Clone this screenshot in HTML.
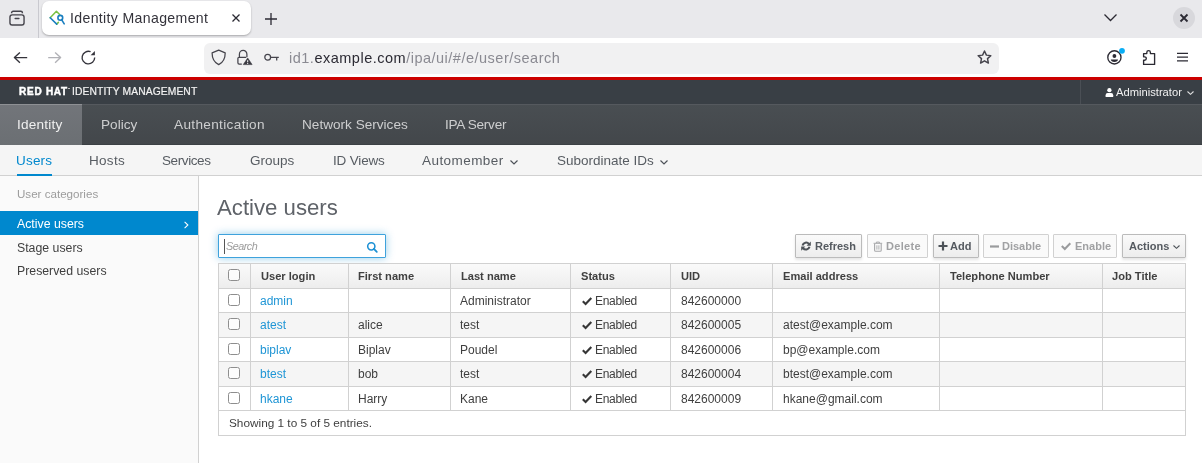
<!DOCTYPE html>
<html><head><meta charset="utf-8">
<style>
*{box-sizing:border-box;margin:0;padding:0}
html,body{width:1202px;height:463px;overflow:hidden;background:#fff;font-family:"Liberation Sans",sans-serif;position:relative}
.a{will-change:transform}
.a{position:absolute;white-space:nowrap}
svg{position:absolute;overflow:visible}
/* browser chrome */
#tabstrip{left:0;top:0;width:1202px;height:38px;background:#e9e9ec}
#sep{left:38px;top:0;width:1px;height:38px;background:#c9c9cf}
#tab{left:42px;top:1px;width:209px;height:34px;background:#fff;border-radius:7px;box-shadow:0 1px 2px rgba(0,0,0,.28)}
#toolbar{left:0;top:38px;width:1202px;height:39px;background:#fff}
#urlbar{left:204px;top:42.5px;width:795px;height:30.5px;background:#f1f1f2;border-radius:6px}
#red{left:0;top:77px;width:1202px;height:3px;background:#cc0000}
#hdr{left:0;top:80px;width:1202px;height:24px;background:#393f45}
#nav{left:0;top:104px;width:1202px;height:41px;background:linear-gradient(#494e52,#43474b);border-top:1px solid #55595e;border-bottom:1px solid #3b4044}
#navact{left:0;top:104px;width:82px;height:41px;background:linear-gradient(#72757a,#6b6f73);border-top:1px solid #8e9094}
#sub{left:0;top:145px;width:1202px;height:31px;background:#f5f5f5;border-bottom:1px solid #d1d1d1}
#subul{left:17px;top:174px;width:35px;height:2px;background:#0088ce}
#side{left:0;top:176px;width:199px;height:287px;background:#fafafa;border-right:1px solid #d1d1d1}
#sideact{left:0;top:211px;width:198px;height:24px;background:#0088ce}
.navt{color:#cdcecf;font-size:13.6px;top:117px}
.subt{color:#575c62;font-size:13.5px;top:152.5px}
.sidet{color:#3f3f3f;font-size:12.3px}
.btn{top:234px;height:24px;border:1px solid #bbb;border-radius:1px;background:linear-gradient(#fafafa,#ededed);box-shadow:0 2px 3px rgba(3,3,3,.1)}
.btn.dis{border-color:#d1d1d1;background:#fafafa;box-shadow:none}
.btnt{top:239.9px;font-size:11px;font-weight:bold;color:#555a60}
.dist{color:#a0a1a3}
.hl{left:218px;width:968px;height:1px;background:#d1d1d1}
.vl{top:263px;width:1px;height:148px;background:#d1d1d1}
.th{top:269.5px;font-size:11.1px;font-weight:bold;color:#404040}
.td{font-size:12px;color:#3f3f3f}
.lk{color:#1f95d5}
.cb{width:12px;height:11.6px;border:1.4px solid #8e8e8e;border-radius:2.5px;background:rgba(255,255,255,.7)}
</style></head><body>
<!-- tab strip -->
<div id="tabstrip" class="a"></div>
<div id="sep" class="a"></div>
<svg style="left:9px;top:10px" width="16" height="16" viewBox="0 0 16 16"><rect x="0.95" y="4.9" width="14.1" height="10.1" rx="2.2" fill="none" stroke="#45444c" stroke-width="1.4"/><path d="M2.6 3.2 V2.8 A1.5 1.5 0 0 1 4.1 1.3 H11.9 A1.5 1.5 0 0 1 13.4 2.8 V3.2" stroke="#45444c" stroke-width="1.4" fill="none"/><path d="M6.2 8.6h3.7" stroke="#45444c" stroke-width="1.5" stroke-linecap="round"/></svg>
<div id="tab" class="a"></div>
<svg style="left:44px;top:6px" width="24" height="24" viewBox="0 0 24 24"><path d="M6.2 11.7L12.4 5.2L15.6 8.6" stroke="#7ac143" stroke-width="1.5" fill="none" stroke-linecap="round" stroke-linejoin="round"/><path d="M12.7 18.1L14.4 16.4" stroke="#7ac143" stroke-width="1.5" fill="none" stroke-linecap="round"/><path d="M6.2 11.7L12.7 18.1" stroke="#1a7fc0" stroke-width="1.6" fill="none" stroke-linecap="round"/><circle cx="16.3" cy="11.8" r="2.4" stroke="#1a7fc0" stroke-width="1.6" fill="none"/><path d="M17.6 13.6L20.2 17.9" stroke="#1a7fc0" stroke-width="1.6" stroke-linecap="round"/></svg>
<div class="a" style="left:69.6px;top:9.5px;font-size:14.1px;letter-spacing:0.35px;color:#34333b">Identity Management</div>
<svg style="left:232px;top:14px" width="8" height="8" viewBox="0 0 8 8"><path d="M0.5 0.5L7.5 7.5M7.5 0.5L0.5 7.5" stroke="#2b2a33" stroke-width="1.3"/></svg>
<svg style="left:265px;top:13px" width="12" height="12" viewBox="0 0 12 12"><path d="M6 0v12M0 6h12" stroke="#2b2a33" stroke-width="1.3"/></svg>
<svg style="left:1104px;top:14px" width="13" height="7" viewBox="0 0 13 7"><path d="M0.5 0.5L6.5 6.5L12.5 0.5" stroke="#2b2a33" stroke-width="1.3" fill="none"/></svg>
<div class="a" style="left:1173px;top:7px;width:22px;height:22px;border-radius:11px;background:#d8d8dc"></div>
<svg style="left:1180px;top:14px" width="8" height="8" viewBox="0 0 8 8"><path d="M0.5 0.5L7.5 7.5M7.5 0.5L0.5 7.5" stroke="#2b2a33" stroke-width="1.8"/></svg>
<!-- toolbar -->
<div id="toolbar" class="a"></div>
<svg style="left:13px;top:51px" width="16" height="13" viewBox="0 0 16 13"><path d="M14.2 6.6H1.6M6.9 1.4L1.4 6.6L6.9 11.8" stroke="#34333b" stroke-width="1.35" fill="none" stroke-linejoin="round"/></svg>
<svg style="left:47px;top:51px" width="16" height="13" viewBox="0 0 16 13"><path d="M1.2 6.6H13.8M8.1 1.4L13.6 6.6L8.1 11.8" stroke="#b1b1b6" stroke-width="1.35" fill="none" stroke-linejoin="round"/></svg>
<svg style="left:81px;top:50px" width="16" height="16" viewBox="0 0 16 16"><path d="M13.7 7.6 A6.3 6.3 0 1 1 9.6 1.7" stroke="#34333b" stroke-width="1.35" fill="none"/><path d="M9.6 5.3 H13.9 V1 Z" fill="#34333b"/></svg>
<div id="urlbar" class="a"></div>
<svg style="left:210px;top:49px" width="17" height="17" viewBox="0 0 17 17"><path d="M8.7 1.2 L15.2 3.9 C15.2 10 12.3 13.8 8.7 15.6 C5.1 13.8 2.1 10 2.1 3.9 Z" stroke="#45444c" stroke-width="1.25" fill="none" stroke-linejoin="round"/></svg>
<svg style="left:236px;top:49px" width="17" height="17" viewBox="0 0 17 17"><path d="M3.4 8.2 V5.2 A3.75 3.75 0 0 1 10.9 5.2 V8.2" stroke="#45444c" stroke-width="1.25" fill="none"/><path d="M5.8 15 H3.2 A1.3 1.3 0 0 1 1.9 13.7 V9.6 A1.3 1.3 0 0 1 3.2 8.3 H10.2" stroke="#45444c" stroke-width="1.25" fill="none"/><path d="M11.7 9 L16.1 15.6 H7.3 Z" fill="#3b3a42" stroke="#3b3a42" stroke-width="0.6" stroke-linejoin="round"/><path d="M11.7 11.2v2" stroke="#fff" stroke-width="1"/><circle cx="11.7" cy="14.4" r="0.55" fill="#fff"/></svg>
<svg style="left:264px;top:53px" width="16" height="9" viewBox="0 0 16 9"><circle cx="3.7" cy="4.3" r="2.9" stroke="#45444c" stroke-width="1.25" fill="none"/><path d="M6.6 4.3H14.8M12.7 4.3V7.6" stroke="#45444c" stroke-width="1.25"/></svg>
<div class="a" style="left:289px;top:49.7px;font-size:14.5px;letter-spacing:0.5px;color:#8a8a92"><span>id1.</span><span style="color:#2b2a33">example.com</span><span>/ipa/ui/#/e/user/search</span></div>
<svg style="left:976px;top:49px" width="17" height="17" viewBox="0 0 17 17"><path d="M8.5 2 L10.4 6.1 L14.8 6.6 L11.5 9.6 L12.4 14.1 L8.5 11.8 L4.6 14.1 L5.5 9.6 L2.2 6.6 L6.6 6.1 Z" stroke="#45444c" stroke-width="1.45" fill="none" stroke-linejoin="round"/></svg>
<svg style="left:1106px;top:49px" width="18" height="17" viewBox="0 0 18 17"><circle cx="8.4" cy="8.4" r="6.6" stroke="#2b2a33" stroke-width="1.35" fill="none"/><circle cx="8.4" cy="7" r="1.9" fill="#2b2a33"/><path d="M4.8 10.6 H12 Q11.8 13 8.4 13 Q5 13 4.8 10.6Z" fill="#2b2a33"/><circle cx="16" cy="1.8" r="2.9" fill="#0aaef5"/></svg>
<svg style="left:1141px;top:49px" width="16" height="17" viewBox="0 0 16 17"><path d="M2.6 15.4 V11.2 H3.6 A1.7 1.7 0 0 0 3.6 7.8 H2.6 V4.6 H5.8 V3.4 A1.8 1.8 0 0 1 9.4 3.4 V4.6 H13.6 V15.4 Z" stroke="#2b2a33" stroke-width="1.35" fill="none" stroke-linejoin="round"/></svg>
<svg style="left:1177px;top:52px" width="12" height="10" viewBox="0 0 12 10"><path d="M0 1.4H11M0 5.2H11M0 8.9H11" stroke="#2b2a33" stroke-width="1.25"/></svg>
<!-- red hat header -->
<div id="red" class="a"></div>
<div id="hdr" class="a"></div>
<div class="a" style="left:18.6px;top:86px;font-size:10px;font-weight:bold;color:#fff;letter-spacing:0.75px;-webkit-text-stroke:0.45px #fff">RED HAT</div><div class="a" style="left:68.3px;top:87.6px;width:2px;height:1px;background:#bbb"></div>
<div class="a" style="left:71.5px;top:85.5px;font-size:10.3px;color:#f2f2f2;letter-spacing:0.1px;-webkit-text-stroke:0.2px #f2f2f2">IDENTITY MANAGEMENT</div>
<div class="a" style="left:1080px;top:80px;width:1px;height:24px;background:#4a4f55"></div>
<svg style="left:1105px;top:88px" width="9" height="9" viewBox="0 0 9 9"><circle cx="4.4" cy="2.2" r="2.15" fill="#fff"/><path d="M0.6 9 V7.2 Q0.6 4.9 2.6 4.9 H6.2 Q8.2 4.9 8.2 7.2 V9Z" fill="#fff"/></svg>
<div class="a" style="left:1116px;top:86px;font-size:11.2px;color:#f2f2f2">Administrator</div>
<svg style="left:1187px;top:91px" width="7" height="4" viewBox="0 0 7 4"><path d="M0.5 0.5L3.5 3.3L6.5 0.5" stroke="#e0e0e0" stroke-width="1.1" fill="none"/></svg>
<!-- primary nav -->
<div id="nav" class="a"></div>
<div id="navact" class="a"></div>
<div class="a navt" style="left:16.5px;color:#f0f0f0;letter-spacing:0.2px">Identity</div>
<div class="a navt" style="left:100.8px">Policy</div>
<div class="a navt" style="left:174px;letter-spacing:0.34px">Authentication</div>
<div class="a navt" style="left:302px">Network Services</div>
<div class="a navt" style="left:445px;letter-spacing:-0.28px">IPA Server</div>
<!-- sub nav -->
<div id="sub" class="a"></div>
<div id="subul" class="a"></div>
<div class="a subt" style="left:16px;color:#0088ce;letter-spacing:0.2px">Users</div>
<div class="a subt" style="left:88.7px;letter-spacing:0.3px">Hosts</div>
<div class="a subt" style="left:162px;letter-spacing:-0.4px">Services</div>
<div class="a subt" style="left:250px">Groups</div>
<div class="a subt" style="left:332.5px;letter-spacing:-0.17px">ID Views</div>
<div class="a subt" style="left:422px;letter-spacing:0.44px">Automember</div>
<svg style="left:510px;top:159.5px" width="8" height="5" viewBox="0 0 8 5"><path d="M0.5 0.5L4 4L7.5 0.5" stroke="#4d5258" stroke-width="1.2" fill="none"/></svg>
<div class="a subt" style="left:556.5px">Subordinate IDs</div>
<svg style="left:660px;top:159.5px" width="8" height="5" viewBox="0 0 8 5"><path d="M0.5 0.5L4 4L7.5 0.5" stroke="#4d5258" stroke-width="1.2" fill="none"/></svg>
<!-- sidebar -->
<div id="side" class="a"></div>
<div class="a" style="left:17px;top:187px;font-size:11.6px;color:#9c9c9c">User categories</div>
<div id="sideact" class="a"></div>
<div class="a sidet" style="left:17px;top:217px;color:#fff">Active users</div>
<svg style="left:184px;top:220.5px" width="5" height="8" viewBox="0 0 5 8"><path d="M0.6 0.8L3.9 4L0.6 7.2" stroke="#fff" stroke-width="1.05" fill="none"/></svg>
<div class="a sidet" style="left:17px;top:240.6px">Stage users</div>
<div class="a sidet" style="left:17px;top:264.3px">Preserved users</div>
<!-- main -->
<div class="a" style="left:217px;top:195px;font-size:22.2px;color:#5f6369">Active users</div>
<!-- MAIN -->
<div class="a" style="left:218px;top:234px;width:168px;height:24px;border:1px solid #3fa2dc;border-radius:1px;box-shadow:0 0 8px rgba(0,136,206,.42);background:#fff"></div>
<div class="a" style="left:224px;top:239px;width:1px;height:15px;background:#555"></div>
<div class="a" style="left:225.5px;top:240px;font-size:10.8px;font-style:italic;color:#9b9b9b;letter-spacing:-0.5px">Search</div>
<svg style="left:366px;top:241px" width="12" height="12" viewBox="0 0 12 12"><circle cx="5.3" cy="5.3" r="3.6" stroke="#1c90d4" stroke-width="1.55" fill="none"/><path d="M7.9 7.9L10.8 10.8" stroke="#1c90d4" stroke-width="1.8" stroke-linecap="round"/></svg>
<div class="a btn" style="left:795px;width:67px"></div>
<div class="a btnt" style="left:814.5px;letter-spacing:0.0px">Refresh</div>
<div class="a btn dis" style="left:867px;width:61px"></div>
<div class="a btnt dist" style="left:885.8px;letter-spacing:0.3px">Delete</div>
<div class="a btn" style="left:933px;width:46px"></div>
<div class="a btnt" style="left:950.2px;letter-spacing:0.1px">Add</div>
<div class="a btn dis" style="left:983px;width:66px"></div>
<div class="a btnt dist" style="left:1002.2px;letter-spacing:0px">Disable</div>
<div class="a btn dis" style="left:1053px;width:64px"></div>
<div class="a btnt dist" style="left:1074.8px;letter-spacing:0px">Enable</div>
<div class="a btn" style="left:1122px;width:64px"></div>
<div class="a btnt" style="left:1129.2px;letter-spacing:0px">Actions</div>
<svg style="left:801px;top:241.4px" width="10" height="10.2" viewBox="0 0 10 10" preserveAspectRatio="none"><path d="M1.5 4.4A3.7 3.7 0 0 1 8 3" stroke="#4d5258" stroke-width="2" fill="none"/><path d="M9.8 0.4V4.6H5.6Z" fill="#4d5258"/><path d="M8.5 5.6A3.7 3.7 0 0 1 2 7" stroke="#4d5258" stroke-width="2" fill="none"/><path d="M0.2 9.6V5.4H4.4Z" fill="#4d5258"/></svg>
<svg style="left:873px;top:241px" width="10" height="11" viewBox="0 0 10 11"><path d="M0.6 2.3H9.2M3.4 2.2V1.1H6.4V2.2" stroke="#a6a7a9" stroke-width="1" fill="none"/><path d="M1.6 2.8V9.2Q1.6 10.3 2.7 10.3H7.1Q8.2 10.3 8.2 9.2V2.8" stroke="#a6a7a9" stroke-width="1.1" fill="none"/><path d="M3.9 4.3V8.6M5.9 4.3V8.6" stroke="#a6a7a9" stroke-width="0.9"/></svg>
<svg style="left:938px;top:241px" width="10" height="10" viewBox="0 0 10 10"><path d="M5 0.5V9.5M0.5 5H9.5" stroke="#4d5258" stroke-width="2.2"/></svg>
<svg style="left:990px;top:245px" width="9" height="3" viewBox="0 0 9 3"><path d="M0 1.5H9" stroke="#9a9b9d" stroke-width="2.2"/></svg>
<svg style="left:1061px;top:242px" width="10" height="8" viewBox="0 0 10 8"><path d="M0.8 4L3.8 7L9.3 1.2" stroke="#9a9b9d" stroke-width="2" fill="none"/></svg>
<svg style="left:1173px;top:245px" width="7" height="4" viewBox="0 0 7 4"><path d="M0.5 0.5L3.5 3.3L6.5 0.5" stroke="#4d5258" stroke-width="1.1" fill="none"/></svg>
<div class="a" style="left:218px;top:263px;width:968px;height:173px;border:1px solid #d1d1d1;background:#fff"></div>
<div class="a" style="left:219px;top:264px;width:966px;height:24px;background:linear-gradient(#fafafa,#ededed)"></div>
<div class="a" style="left:219px;top:313px;width:966px;height:24px;background:#f5f5f5"></div>
<div class="a" style="left:219px;top:362px;width:966px;height:24px;background:#f5f5f5"></div>
<div class="a hl" style="top:288px"></div>
<div class="a hl" style="top:312px"></div>
<div class="a hl" style="top:337px"></div>
<div class="a hl" style="top:361px"></div>
<div class="a hl" style="top:386px"></div>
<div class="a hl" style="top:410px"></div>
<div class="a vl" style="left:250px"></div>
<div class="a vl" style="left:348px"></div>
<div class="a vl" style="left:450px"></div>
<div class="a vl" style="left:570px"></div>
<div class="a vl" style="left:670px"></div>
<div class="a vl" style="left:772px"></div>
<div class="a vl" style="left:939px"></div>
<div class="a vl" style="left:1102px"></div>
<div class="a th" style="left:260.6px">User login</div>
<div class="a th" style="left:358.4px">First name</div>
<div class="a th" style="left:460.6px">Last name</div>
<div class="a th" style="left:581px">Status</div>
<div class="a th" style="left:681px">UID</div>
<div class="a th" style="left:783px">Email address</div>
<div class="a th" style="left:949.6px">Telephone Number</div>
<div class="a th" style="left:1112px">Job Title</div>
<div class="a cb" style="left:228px;top:269.1px"></div>
<div class="a cb" style="left:228px;top:293.6px"></div>
<div class="a cb" style="left:228px;top:318.1px"></div>
<div class="a cb" style="left:228px;top:342.6px"></div>
<div class="a cb" style="left:228px;top:367.1px"></div>
<div class="a cb" style="left:228px;top:391.6px"></div>
<div class="a td lk" style="left:260px;top:293.8px">admin</div>
<div class="a td" style="left:459.9px;top:293.8px">Administrator</div>
<svg style="left:581.5px;top:297px" width="10" height="8" viewBox="0 0 10 8"><path d="M0.8 4.2L3.6 7L9.3 1" stroke="#363636" stroke-width="2.1" fill="none"/></svg>
<div class="a td" style="left:595.4px;top:293.8px;letter-spacing:-0.3px">Enabled</div>
<div class="a td" style="left:680.5px;top:293.8px">842600000</div>
<div class="a td lk" style="left:260px;top:317.8px">atest</div>
<div class="a td" style="left:357.8px;top:317.8px">alice</div>
<div class="a td" style="left:459.9px;top:317.8px">test</div>
<svg style="left:581.5px;top:321px" width="10" height="8" viewBox="0 0 10 8"><path d="M0.8 4.2L3.6 7L9.3 1" stroke="#363636" stroke-width="2.1" fill="none"/></svg>
<div class="a td" style="left:595.4px;top:317.8px;letter-spacing:-0.3px">Enabled</div>
<div class="a td" style="left:680.5px;top:317.8px">842600005</div>
<div class="a td" style="left:782.5px;top:317.8px">atest@example.com</div>
<div class="a td lk" style="left:260px;top:342.8px">biplav</div>
<div class="a td" style="left:357.8px;top:342.8px">Biplav</div>
<div class="a td" style="left:459.9px;top:342.8px">Poudel</div>
<svg style="left:581.5px;top:346px" width="10" height="8" viewBox="0 0 10 8"><path d="M0.8 4.2L3.6 7L9.3 1" stroke="#363636" stroke-width="2.1" fill="none"/></svg>
<div class="a td" style="left:595.4px;top:342.8px;letter-spacing:-0.3px">Enabled</div>
<div class="a td" style="left:680.5px;top:342.8px">842600006</div>
<div class="a td" style="left:782.5px;top:342.8px">bp@example.com</div>
<div class="a td lk" style="left:260px;top:366.8px">btest</div>
<div class="a td" style="left:357.8px;top:366.8px">bob</div>
<div class="a td" style="left:459.9px;top:366.8px">test</div>
<svg style="left:581.5px;top:370px" width="10" height="8" viewBox="0 0 10 8"><path d="M0.8 4.2L3.6 7L9.3 1" stroke="#363636" stroke-width="2.1" fill="none"/></svg>
<div class="a td" style="left:595.4px;top:366.8px;letter-spacing:-0.3px">Enabled</div>
<div class="a td" style="left:680.5px;top:366.8px">842600004</div>
<div class="a td" style="left:782.5px;top:366.8px">btest@example.com</div>
<div class="a td lk" style="left:260px;top:391.8px">hkane</div>
<div class="a td" style="left:357.8px;top:391.8px">Harry</div>
<div class="a td" style="left:459.9px;top:391.8px">Kane</div>
<svg style="left:581.5px;top:395px" width="10" height="8" viewBox="0 0 10 8"><path d="M0.8 4.2L3.6 7L9.3 1" stroke="#363636" stroke-width="2.1" fill="none"/></svg>
<div class="a td" style="left:595.4px;top:391.8px;letter-spacing:-0.3px">Enabled</div>
<div class="a td" style="left:680.5px;top:391.8px">842600009</div>
<div class="a td" style="left:782.5px;top:391.8px">hkane@gmail.com</div>
<div class="a td" style="left:228.8px;top:416px;font-size:11.8px">Showing 1 to 5 of 5 entries.</div>
<!-- /MAIN -->
</body></html>
